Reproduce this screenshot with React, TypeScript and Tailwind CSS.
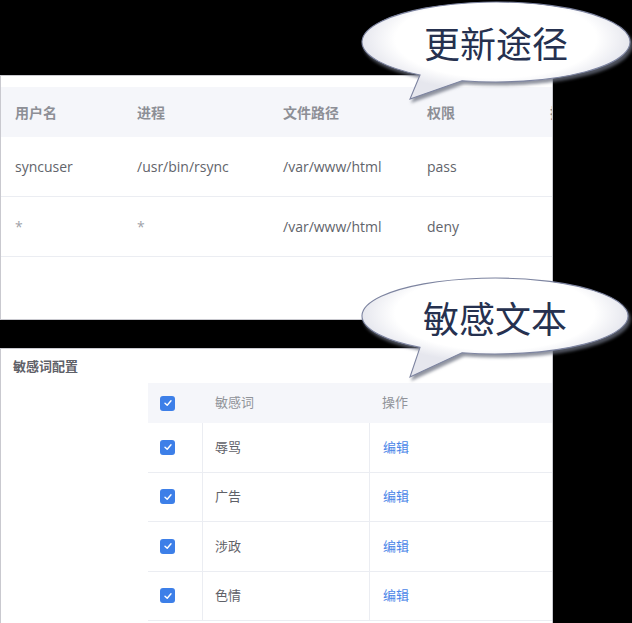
import React from "react";

const cn = '"Open Sans", "Noto Sans CJK SC", sans-serif';

type BubbleProps = {
  cx: number;
  cy: number;
  rx: number;
  ry: number;
  tip: [number, number];
  joinL: number;
  joinR: number;
  id: string;
};

function bubblePath({ cx, cy, rx, ry, tip, joinL, joinR }: BubbleProps) {
  const yAt = (x: number) => cy + ry * Math.sqrt(1 - ((x - cx) / rx) ** 2);
  const yl = yAt(joinL);
  const yr = yAt(joinR);
  return `M${joinL} ${yl} L${tip[0]} ${tip[1]} L${joinR} ${yr} A${rx} ${ry} 0 1 0 ${joinL} ${yl} Z`;
}

function Bubble(props: BubbleProps) {
  return (
    <svg className="absolute left-0 top-0 pointer-events-none" width={632} height={623}>
      <defs>
        <radialGradient id={props.id} cx={props.cx} cy={props.cy - 8} r={props.rx} gradientUnits="userSpaceOnUse" gradientTransform={`translate(0 ${props.cy}) scale(1 ${(props.ry * 1.3) / props.rx}) translate(0 ${-props.cy})`}>
          <stop offset="0.75" stopColor="#ffffff" />
          <stop offset="1" stopColor="#e6e7ee" />
        </radialGradient>
        <filter id={props.id + "s"} x="-10%" y="-20%" width="120%" height="150%">
          <feDropShadow dx="2" dy="3" stdDeviation="1.6" floodColor="#6b6f80" floodOpacity="0.75" />
        </filter>
      </defs>
      <path d={bubblePath(props)} fill={`url(#${props.id})`} stroke="#7d84a0" strokeWidth="1.1" filter={`url(#${props.id}s)`} />
    </svg>
  );
}

function Check() {
  return (
    <span className="flex h-[15px] w-[15px] items-center justify-center rounded-[3px] bg-[#3d7fe8]">
      <svg width="10" height="10" viewBox="0 0 10 10">
        <path d="M2 5.2 L4.2 7.3 L8 2.8" fill="none" stroke="white" strokeWidth="1.4" strokeLinecap="round" strokeLinejoin="round" />
      </svg>
    </span>
  );
}

const pathRows = [
  ["syncuser", "/usr/bin/rsync", "/var/www/html", "pass"],
  ["*", "*", "/var/www/html", "deny"],
];

const words = ["辱骂", "广告", "涉政", "色情"];

export default function App() {
  return (
    <div className="relative h-[623px] w-[632px] overflow-hidden bg-black" style={{ fontFamily: cn }}>
      <div className="flex flex-col gap-[28px] pt-[75px]">
        {/* 更新途径 panel */}
        <div className="h-[245px] w-[553px] overflow-hidden border border-[#c9c9cf] bg-white pt-[11px]">
          <div className="grid h-[50px] grid-cols-[122px_146px_144px_123px_1fr] items-center bg-[#f5f6fa] pl-[14px] text-[14px] font-semibold text-[#8d8f96]">
            <span>用户名</span>
            <span>进程</span>
            <span>文件路径</span>
            <span>权限</span>
            <span className="whitespace-nowrap">操作</span>
          </div>
          {pathRows.map((r, i) => (
            <div key={i} className="grid h-[60px] grid-cols-[122px_146px_144px_123px_1fr] items-center border-b border-[#ebedf2] pl-[14px] text-[14px] text-[#62646b]">
              {r.map((c, j) => (
                <span key={j} className={c === "*" ? "text-[#a0a2a8]" : ""}>
                  {c}
                </span>
              ))}
            </div>
          ))}
        </div>

        {/* 敏感词 panel */}
        <div className="h-[276px] w-[553px] overflow-hidden border border-[#c9c9cf] bg-white">
          <div className="pl-[12px] pt-[8px] text-[13px] font-semibold leading-[18px] text-[#5f6168]">敏感词配置</div>
          <div className="ml-[147px] mt-[8px]">
            <div className="grid h-[40px] grid-cols-[55px_167px_1fr] items-center bg-[#f5f6fa] text-[13px] text-[#909399]">
              <span className="pl-[12px]">
                <Check />
              </span>
              <span className="pl-[12px]">敏感词</span>
              <span className="pl-[12px]">操作</span>
            </div>
            {words.map((w) => (
              <div key={w} className="grid h-[49.5px] grid-cols-[55px_167px_1fr] items-stretch border-b border-[#ebedf2] text-[13px]">
                <span className="flex items-center border-r border-[#ebedf2] pl-[12px]">
                  <Check />
                </span>
                <span className="flex items-center border-r border-[#ebedf2] pl-[12px] text-[#5f6168]">{w}</span>
                <span className="flex items-center pl-[13px] text-[#4b86e8]">编辑</span>
              </div>
            ))}
          </div>
        </div>
      </div>

      <Bubble id="b1" cx={496} cy={42} rx={134} ry={40} tip={[410, 99]} joinL={420} joinR={462} />
      <div className="absolute left-[362px] top-[18px] w-[268px] text-center text-[36px] leading-[48px] text-[#26314f]" style={{ fontFamily: '"Noto Sans CJK SC", sans-serif' }}>
        更新途径
      </div>

      <Bubble id="b2" cx={495} cy={316} rx={133} ry={38} tip={[410, 377]} joinL={420} joinR={462} />
      <div className="absolute left-[361px] top-[293px] w-[268px] text-center text-[36px] leading-[48px] text-[#26314f]" style={{ fontFamily: '"Noto Sans CJK SC", sans-serif' }}>
        敏感文本
      </div>
    </div>
  );
}
